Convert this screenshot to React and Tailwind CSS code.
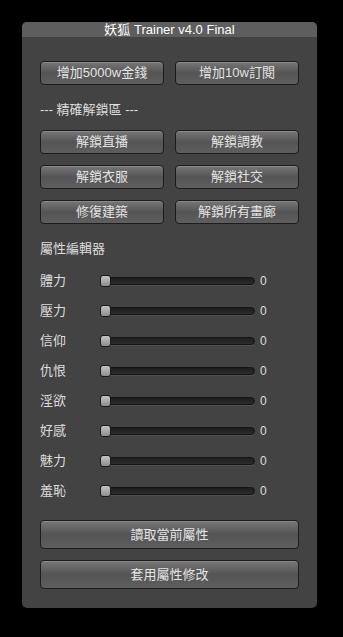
const FONT = { fontFamily: '"Liberation Sans", "Noto Sans CJK TC", sans-serif' };

const STATS = ['體力', '壓力', '信仰', '仇恨', '淫欲', '好感', '魅力', '羞恥'];

function Btn({ children, className = '' }) {
    return (
        <button
            className={`flex items-center justify-center rounded-[4px] border border-[#1c1c1c] bg-gradient-to-b from-[#777777] via-[#555555] to-[#5e5e5e] text-[13px] text-[#e4e4e4] shadow-[inset_0_1px_0_rgba(255,255,255,0.15)] ${className}`}
        >
            {children}
        </button>
    );
}

function Slider() {
    return (
        <div className="relative h-[12px] w-[155px]">
            <div className="absolute left-0 right-0 top-[2px] h-[8px] rounded-full border border-[#151515] bg-gradient-to-b from-[#1e1e1e] to-[#2c2c2c] shadow-[0_1px_0_rgba(255,255,255,0.08)]" />
            <div className="absolute left-0 top-0 h-[12px] w-[11px] rounded-[3px] border border-[#1a1a1a] bg-gradient-to-b from-[#c4c4c4] to-[#8e8e8e]" />
        </div>
    );
}

export default function App() {
    return (
        <div className="min-h-[637px] w-[343px] bg-black pl-[22px] pt-[22px]" style={FONT}>
            <div className="flex h-[586px] w-[295px] flex-col overflow-hidden rounded-[5px] bg-[#434343]">
                <div className="flex h-[15px] items-center justify-center bg-[#5e5e5e] text-[13px] leading-none text-white">
                    妖狐 Trainer v4.0 Final
                </div>

                <div className="px-[18px] pt-[24px]">
                    <div className="flex gap-[11px]">
                        <Btn className="h-[24px] w-[124px]">增加5000w金錢</Btn>
                        <Btn className="h-[24px] w-[124px]">增加10w訂閱</Btn>
                    </div>

                    <div className="mt-[16px] text-[13px] leading-[18px] text-[#dddddd]">--- 精確解鎖區 ---</div>

                    <div className="mt-[11px] grid grid-cols-[124px_124px] gap-x-[11px] gap-y-[11px]">
                        <Btn className="h-[24px]">解鎖直播</Btn>
                        <Btn className="h-[24px]">解鎖調教</Btn>
                        <Btn className="h-[24px]">解鎖衣服</Btn>
                        <Btn className="h-[24px]">解鎖社交</Btn>
                        <Btn className="h-[24px]">修復建築</Btn>
                        <Btn className="h-[24px]">解鎖所有畫廊</Btn>
                    </div>

                    <div className="mt-[16px] text-[13px] leading-[18px] text-[#dddddd]">屬性編輯器</div>

                    <div className="mt-[8px] flex flex-col">
                        {STATS.map((s) => (
                            <div key={s} className="flex h-[30px] items-center">
                                <span className="w-[60px] text-[13px] text-[#dddddd]">{s}</span>
                                <Slider />
                                <span className="ml-[5px] text-[12px] text-[#dddddd]">0</span>
                            </div>
                        ))}
                    </div>

                    <div className="mt-[14px] flex flex-col gap-[11px]">
                        <Btn className="h-[29px] w-[259px]">讀取當前屬性</Btn>
                        <Btn className="h-[29px] w-[259px]">套用屬性修改</Btn>
                    </div>
                </div>
            </div>
        </div>
    );
}
